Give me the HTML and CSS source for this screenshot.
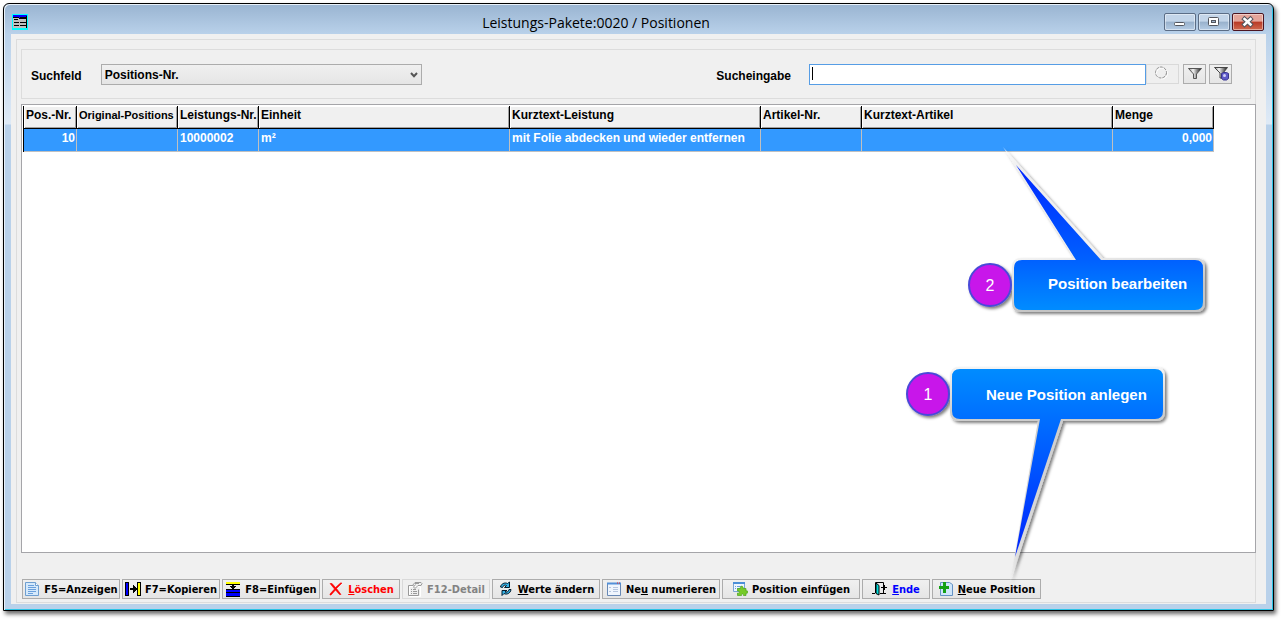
FILE: index.html
```html
<!DOCTYPE html>
<html lang="de">
<head>
<meta charset="utf-8">
<title>Leistungs-Pakete:0020 / Positionen</title>
<link rel="stylesheet" href="styles.css">
</head>
<body>
<div class="window">
  <header class="titlebar">
    <svg class="app-icon" viewBox="0 0 16 16" shape-rendering="crispEdges"><path fill="#0ff" d="M0 0h16v16H0z"/><path fill="#c0c0c0" d="M1 1h14v13H1z"/><path fill="#00f" d="M1 1h14v3H1z"/><path d="M1 3h6v1H1zM8 3h6v1H8zM2 5h4v1H2zM7 4h7v1H7zM2 8h5v1H2zM8 8h6v1H8zM2 11h5v1H2zM8 11h6v1H8zM14 2h1v12h-1z"/></svg>
    <h1 class="title">Leistungs-Pakete:0020 / Positionen</h1>
    <div class="caption-buttons">
      <button class="caption" aria-label="Minimieren"><svg viewBox="0 0 32 18"><rect x="10.500" y="9.500" width="10" height="3" rx="1" fill="#fff" stroke="#53565e"/></svg></button>
      <button class="caption" aria-label="Maximieren"><svg viewBox="0 0 32 18"><rect x="10.500" y="4.500" width="10" height="8" rx="1" fill="#fff" stroke="#53565e"/><rect x="13.500" y="7.500" width="4" height="2" fill="#9fb4cc" stroke="#53565e"/></svg></button>
      <button class="caption close" aria-label="Schließen"><svg viewBox="0 0 32 18"><path d="M12.500 6l6 5.500M18.500 6l-6 5.500" stroke="#53565e" stroke-width="4.500" stroke-linecap="square"/><path d="M12.500 6l6 5.500M18.500 6l-6 5.500" stroke="#fff" stroke-width="2.500" stroke-linecap="square"/></svg></button>
    </div>
  </header>
  <main class="client">
    <div class="frame">
      <form class="search">
        <label class="search-label" for="field">Suchfeld</label>
        <span class="select-box">
          <select id="field" class="field"><option>Positions-Nr.</option></select>
          <svg class="chevron" viewBox="0 0 8 6"><path d="M1 1l3 3.200 3-3.200" fill="none" stroke="#555" stroke-width="2"/></svg>
        </span>
        <label class="search-label query-label" for="query">Sucheingabe</label>
        <span class="query-box"><input id="query" class="query" type="text"></span>
        <button class="tool busy" type="button" disabled aria-label="Suchen"><svg viewBox="0 0 16 16"><circle cx="9" cy="8.500" r="5.500" fill="none" stroke="#fff"/><circle cx="8" cy="7.500" r="5.500" fill="none" stroke="#8c8c8c" stroke-dasharray="3 1"/></svg></button>
        <button class="tool filter" type="button" aria-label="Filter"><svg viewBox="0 0 16 16"><defs><linearGradient id="fun"><stop offset="0" stop-color="#888"/><stop offset=".35" stop-color="#f4f4f4"/><stop offset=".7" stop-color="#777"/><stop offset="1" stop-color="#111"/></linearGradient></defs><path d="M1.500 2.500h13L9.500 8v4.500h-3V8z" fill="url(#fun)" stroke="#555"/></svg></button>
        <button class="tool filter" type="button" aria-label="Filter einstellen"><svg viewBox="0 0 16 16"><path d="M1.500 1.500h13L10 7v5H7V7z" fill="url(#fun)" stroke="#444"/><path d="M8.500 7.500l2-1h3l2 1v5l-2 1.500h-3l-2-1.500z" fill="#5f5bc8" stroke="#39358f"/><circle cx="11.500" cy="9.500" r="1.500" fill="#d0d0f6"/></svg></button>
      </form>
      <div class="list">
        <table class="grid">
          <colgroup><col class="c-pos"><col class="c-mid"><col class="c-no"><col class="c-wide"><col class="c-wide"><col class="c-mid"><col class="c-wide"><col class="c-mid"></colgroup>
          <thead><tr><th>Pos.-Nr.</th><th class="long">Original-Positions</th><th>Leistungs-Nr.</th><th>Einheit</th><th>Kurztext-Leistung</th><th>Artikel-Nr.</th><th>Kurztext-Artikel</th><th>Menge</th></tr></thead>
          <tbody><tr><td class="num">10</td><td></td><td>10000002</td><td>m²</td><td>mit Folie abdecken und wieder entfernen</td><td></td><td></td><td class="num">0,000</td></tr></tbody>
        </table>
      </div>
      <div class="actions">
        <button class="action w98"><svg viewBox="0 0 16 16"><path d="M1.500 1.500h10l3 3v10h-13z" fill="#d5e9fb" stroke="#6f9fd0"/><path d="M11.500 1.500v3h3" fill="#fff" stroke="#6f9fd0"/><path d="M4 4.500h6M4 6.500h8M4 8.500h8M4 10.500h8M4 12.500h5" stroke="#6ba0dc"/></svg><span>F5=Anzeigen</span></button>
        <button class="action w98"><svg viewBox="0 0 16 16" shape-rendering="crispEdges"><path d="M0 1h4v14H0zM12 1h4v14h-4zM5 7h3V4h1v1h1v1h1v1h1v2h-1v1h-1v1H9v1H8V9H5z"/><path fill="#00f" d="M1 2h2v12H1z"/><path fill="#ff0" d="M13 2h2v12h-2z"/></svg><span>F7=Kopieren</span></button>
        <button class="action w98"><svg viewBox="0 0 16 16" shape-rendering="crispEdges"><path d="M1 1h14v3H1zM7 4h2v1h2v1h-1v1H9v1h6v8H1V8h6V7H6V6H5V5h2z"/><path fill="#ff0" d="M1 1h14v2H1z"/><path fill="#00f" d="M1 9h14v2H1zM1 12h14v3H1z"/></svg><span>F8=Einfügen</span></button>
        <button class="action danger w78"><svg viewBox="0 0 16 16"><path d="M2 2.500h2l3.500 4L12.500 2H14L8.500 7.500l4.500 6h-1.500l-4-4.500L3 14H2v-1l4.500-5z" fill="red" stroke="red" stroke-width=".6"/></svg><span><u>L</u>öschen</span></button>
        <button class="action w88" disabled><svg viewBox="0 0 16 16" fill="none" stroke="#fff"><path d="M2.500 5.500h11v10h-11z"/><path stroke="#999" d="M1.500 4.500h5M1.500 4.500v10h10v-6M4 8.500h1M6 8.500h3M4 10.500h1M6 10.500h4M4 12.500h1M6 12.500h4M5 5l3-3.500h6l1 1-1 2h-3L8 7.500 6.500 6l2-2.500M8 2.500h4"/></svg><span>F12-Detail</span></button>
        <button class="action w108"><svg viewBox="0 0 16 16"><path d="M2.500 6c.5-3 4-5 7-3.500L11.500 1v5.500h-5l2-2C7 3.500 5 4.500 4.500 6.500zM13 8.500c-.5 4-4.500 5.500-7 4l-2 2V9.500h5l-2 1.500c2 .8 3.500-.5 4-2.500z" fill="#35b3e8" stroke="#001a2b"/></svg><span><u>W</u>erte ändern</span></button>
        <button class="action w118"><svg viewBox="0 0 16 16"><path d="M1.500 2.500h13v12h-13z" fill="#eff5fd" stroke="#6788b5"/><path d="M1 1.500h14v2H1z" fill="#5290d9"/><path d="M11 2h1M13 2h1" stroke="#e22"/><path d="M3 6.500h2M3 10.500h2M7 6.500h5M7 8.500h5M7 10.500h5" stroke="#b5c5df"/></svg><span>Ne<u>u</u> numerieren</span></button>
        <button class="action w138"><svg viewBox="0 0 16 16"><path d="M1.500 1.500h11v9h-11z" fill="#edf5fe" stroke="#78a4d6"/><path d="M1 1h12v2H1z" fill="#4b8fd7"/><path d="M3 5.500h1M5 5.500h5M3 7.500h1M5 7.500h3" stroke="#6ba0dc"/><path d="M5.500 7.500h3c-1-3 3.500-3 2.500 0h3v2.500c2.500-1 2.500 3 0 2.200v2.300h-2.500c.5-2-2.500-2-2 0h-4V12c2.500 1 2.500-2.500 0-2z" fill="#76ca28" stroke="#4ba31a" stroke-width=".7"/></svg><span>Position einfügen</span></button>
        <button class="action link w68"><svg viewBox="0 0 16 16"><path d="M0 12.500h3M8 12.500h6M3.500 12V1.500h8V12M9 6.500h6M12.500 4v5" fill="none" stroke="#000"/><path d="M4 2l3 2.500V14l-3-1.500z" fill="#0dd" stroke="#000"/></svg><span><u>E</u>nde</span></button>
        <button class="action w109"><svg viewBox="0 0 16 16"><path d="M2.500 1.500h9l3 2v11h-12z" fill="#cfe6fa" stroke="#6592c4"/><path d="M5 1h3v4h3v3H8v4H5V8H1V5h4z" fill="#14a014"/></svg><span><u>N</u>eue Position</span></button>
      </div>
    </div>
  </main>
</div>
<svg class="notes" viewBox="0 0 1282 619">
  <defs>
    <linearGradient id="up" gradientUnits="userSpaceOnUse" x1="0" y1="165" x2="0" y2="310"><stop offset="0" stop-color="#0024ff"/><stop offset=".65" stop-color="#0060ff"/><stop offset="1" stop-color="#008cff"/></linearGradient>
    <linearGradient id="down" gradientUnits="userSpaceOnUse" x1="0" y1="369" x2="0" y2="556"><stop offset="0" stop-color="#008cff"/><stop offset=".27" stop-color="#006eff"/><stop offset="1" stop-color="#0024ff"/></linearGradient>
    <linearGradient id="rim-up" gradientUnits="userSpaceOnUse" x1="1003" y1="147" x2="1030" y2="312"><stop offset="0" stop-color="#fff" stop-opacity=".6"/><stop offset=".2" stop-color="#eee"/><stop offset=".68" stop-color="#f2f2f2"/><stop offset="1" stop-color="#c4c4c4"/></linearGradient>
    <linearGradient id="rim-down" gradientUnits="userSpaceOnUse" x1="0" y1="367" x2="0" y2="583"><stop offset="0" stop-color="#f4f4f4"/><stop offset=".22" stop-color="#ccc"/><stop offset=".85" stop-color="#ddd"/><stop offset="1" stop-color="#eee" stop-opacity=".3"/></linearGradient>
    <filter id="shade" x="-20%" y="-20%" width="150%" height="150%"><feDropShadow dx="2" dy="2" stdDeviation="1.500" flood-opacity=".5"/></filter>
  </defs>
  <g filter="url(#shade)">
    <path fill="url(#rim-up)" d="M1003 147L1103 258H1196Q1205 258 1205 267V303Q1205 312 1196 312H1021Q1012 312 1012 303V267Q1012 258 1021 258H1074Z"/>
    <path fill="url(#rim-down)" d="M1010 583L1038 421H959Q950 421 950 412V376Q950 367 959 367H1156Q1165 367 1165 376V412Q1165 421 1156 421H1063Z"/>
    <circle cx="990" cy="285" r="21" fill="#c814ea" stroke="#4a4ad8" stroke-width="2"/>
    <circle cx="928" cy="394" r="21" fill="#c814ea" stroke="#4a4ad8" stroke-width="2"/>
  </g>
  <path fill="url(#up)" d="M1016 165L1101 260H1195Q1203 260 1203 268V302Q1203 310 1195 310H1022Q1014 310 1014 302V268Q1014 260 1022 260H1076Z"/>
  <path fill="url(#down)" d="M1015 557L1040 419H960Q952 419 952 411V377Q952 369 960 369H1155Q1163 369 1163 377V411Q1163 419 1155 419H1061Z"/>
  <text class="digit" x="990" y="291">2</text>
  <text class="digit" x="928" y="400">1</text>
  <text class="note" x="1048" y="289">Position bearbeiten</text>
  <text class="note" x="986" y="400">Neue Position anlegen</text>
</svg>
</body>
</html>
```
FILE: styles.css
```css
* { box-sizing: border-box; }
body {
  margin: 0;
  min-height: 100vh;
  padding: 3px 8px 8px 3px;
  display: flex;
  position: relative;
  background: #fff;
  font: bold 12px/14px "Liberation Sans", sans-serif;
  color: #000;
}
.window {
  flex: 1;
  display: flex;
  flex-direction: column;
  padding: 0 7px 6px;
  border: 1px solid #000;
  border-radius: 6px 6px 0 0;
  background: linear-gradient(#99b4d1, #b9d1ea 30px, #dfeaf6 120px, #b9d1ea 121px);
  box-shadow: inset 1px 1px 0 #e8f1fa, inset -1px -1px 0 #2cc4e6, 2px 3px 4px rgba(0, 0, 0, .6);
}
.titlebar {
  height: 30px;
  display: flex;
  align-items: center;
  padding: 0 2px 0 1px;
}
.app-icon { width: 16px; height: 16px; margin-top: 6px; }
.title {
  flex: 1;
  margin: 8px 0 0;
  text-align: center;
  font: 14px/20px "Open Sans", sans-serif;
}
.caption-buttons { display: flex; gap: 2px; justify-content: flex-end; margin-top: 6px; }
.caption {
  width: 32px;
  height: 18px;
  padding: 0;
  border: 1px solid #5b6d86;
  border-radius: 2px;
  background: linear-gradient(#c3d5e9 45%, #98b1cc 50%, #b5cce5);
  box-shadow: inset 0 0 0 1px rgba(255, 255, 255, .45);
}
.caption svg { display: block; width: 32px; height: 18px; margin: -1px; }
.close { border-color: #4c1420; background: linear-gradient(#e5a59a 45%, #b83a26 50%, #d0694f); }
.client {
  flex: 1;
  display: flex;
  padding: 5px 10px 1px 5px;
  background: #f0f0f0;
}
.frame {
  flex: 1;
  min-width: 0;
  display: flex;
  flex-direction: column;
  border: 1px solid #dcdcdc;
  padding: 9px 0 3px 4px;
}
.search {
  height: 50px;
  margin: 0 4px 5px 0;
  padding: 0 18px 0 9px;
  display: flex;
  align-items: center;
  border: 1px solid #dcdcdc;
}
.search-label { padding-top: 4px; }
.select-box { position: relative; width: 321px; margin-left: 19px; }
.field {
  display: block;
  appearance: none;
  width: 100%;
  height: 21px;
  padding: 2px 3px 0;
  border: 1px solid #acacac;
  border-radius: 0;
  background: linear-gradient(#f0f0f0, #e5e5e5);
  font: inherit;
  color: inherit;
}
.chevron { position: absolute; right: 4px; top: 8px; width: 8px; height: 6px; }
.query-label { margin-left: auto; }
.query-box { position: relative; width: 337px; margin-left: 18px; }
.query-box::after { content: ""; position: absolute; left: 3px; top: 3px; width: 1px; height: 13px; background: #000; }
.query { display: block; width: 100%; height: 21px; padding: 0 4px; border: 1px solid #569de5; font: inherit; }
.tool {
  height: 20px;
  padding: 0;
  display: flex;
  align-items: center;
  justify-content: center;
  border: 1px solid #acacac;
  background: linear-gradient(#f0f0f0, #e5e5e5);
}
.tool svg { width: 16px; height: 16px; }
.busy { width: 33px; border-color: #d9d9d9; background: #efefef; margin-right: 4px; padding: 0 4px 3px 0; }
.filter { width: 23px; }
.filter + .filter { margin-left: 3px; }
.list {
  flex: 1;
  margin-right: -1px;
  padding: 1px;
  border: 1px solid #a5a5a9;
  background: #fff;
}
.grid { table-layout: fixed; width: 1191px; border-collapse: separate; border-spacing: 0; border-left: 1px solid #000; }
.c-pos { width: 53px; }
.c-no { width: 81px; }
.c-mid { width: 101px; }
.c-wide { width: 251px; }
.grid th, .grid td { height: 23px; padding: 2px 1px 0 2px; text-align: left; vertical-align: top; white-space: nowrap; overflow: hidden; }
.grid th { background: #f0f0f0; border-right: 1px solid #000; border-bottom: 1px solid #000; box-shadow: inset 1px 1px 0 #fff, inset -1px -1px 0 #a0a0a0; padding-right: 0; }
.grid .long { font-size: 11px; }
.grid td { background: #3399ff; color: #fff; border-right: 1px solid #c0c0c0; border-bottom: 1px solid #c0c0c0; }
.grid .num { text-align: right; }
.actions { display: flex; gap: 2px; margin-top: 26px; padding-left: 1px; }
.action {
  height: 20px;
  padding: 0;
  display: flex;
  align-items: center;
  justify-content: center;
  gap: 4px;
  border: 1px solid #acacac;
  background: linear-gradient(#f0f0f0, #e5e5e5);
  font: bold 11px/16px "DejaVu Sans Condensed", "DejaVu Sans", sans-serif;
  color: #000;
  white-space: nowrap;
}
.action svg { width: 16px; height: 16px; flex: none; }
.action span { padding-top: 2px; }
.action:disabled { color: #838383; border-color: #d9d9d9; background: #efefef; }
.action.danger { color: #f00; }
.action.link { color: #00f; }
.w68 { width: 68px; }
.w78 { width: 78px; }
.w88 { width: 88px; }
.w98 { width: 98px; }
.w108 { width: 108px; }
.w109 { width: 109px; }
.w118 { width: 118px; }
.w138 { width: 138px; }
.notes { position: absolute; left: 0; top: 0; width: 1282px; height: 619px; pointer-events: none; }
.note, .digit { fill: #fff; font: bold 15px "Liberation Sans", sans-serif; }
.digit { font-weight: normal; font-size: 16px; text-anchor: middle; }
```
